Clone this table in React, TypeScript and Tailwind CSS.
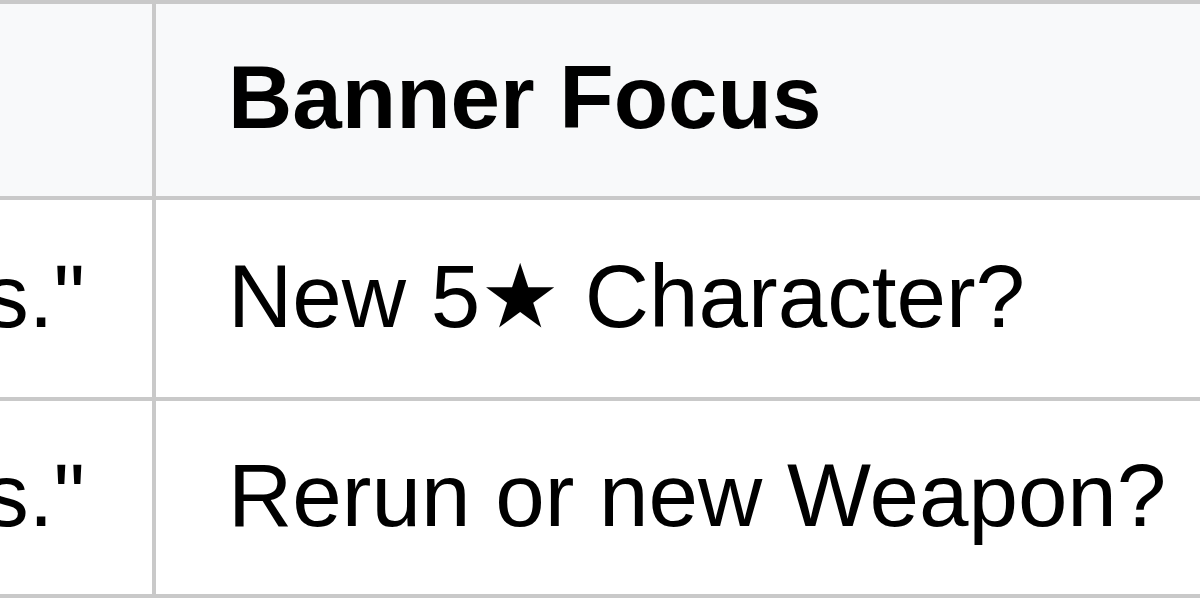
const rows = [
  { quote: '"Fate brings stars."', focus: 'New 5★ Character?', h: 'h-[201px]' },
  { quote: '"Steel remembers."', focus: 'Rerun or new Weapon?', h: 'h-[197px]' },
]

export default function App() {
  return (
    <div
      className="w-[1200px] h-[600px] overflow-hidden bg-white text-black"
      style={{ fontFamily: '"Liberation Sans", Arial, "DejaVu Sans", sans-serif' }}
    >
      <div className="grid grid-cols-[156px_1fr] border-t-4 border-[#c9c9c9] text-[89px] leading-none">
        <div className="h-[196px] bg-[#f8f9fa] border-r-4 border-b-4 border-[#c9c9c9]" />
        <div className="h-[196px] bg-[#f8f9fa] border-b-4 border-[#c9c9c9] flex items-center pl-[72px] pb-[6px] font-bold whitespace-nowrap">
          Banner Focus
        </div>
        {rows.map((row, i) => (
          <div key={i} className="contents">
            <div className={`${row.h} border-r-4 border-b-4 border-[#c9c9c9] flex items-center justify-end overflow-hidden pr-[67px] pb-[4px] whitespace-nowrap`}>
              {row.quote}
            </div>
            <div className={`${row.h} border-b-4 border-[#c9c9c9] flex items-center pl-[72px] pb-[4px] whitespace-nowrap`}>
              {row.focus}
            </div>
          </div>
        ))}
      </div>
    </div>
  )
}
